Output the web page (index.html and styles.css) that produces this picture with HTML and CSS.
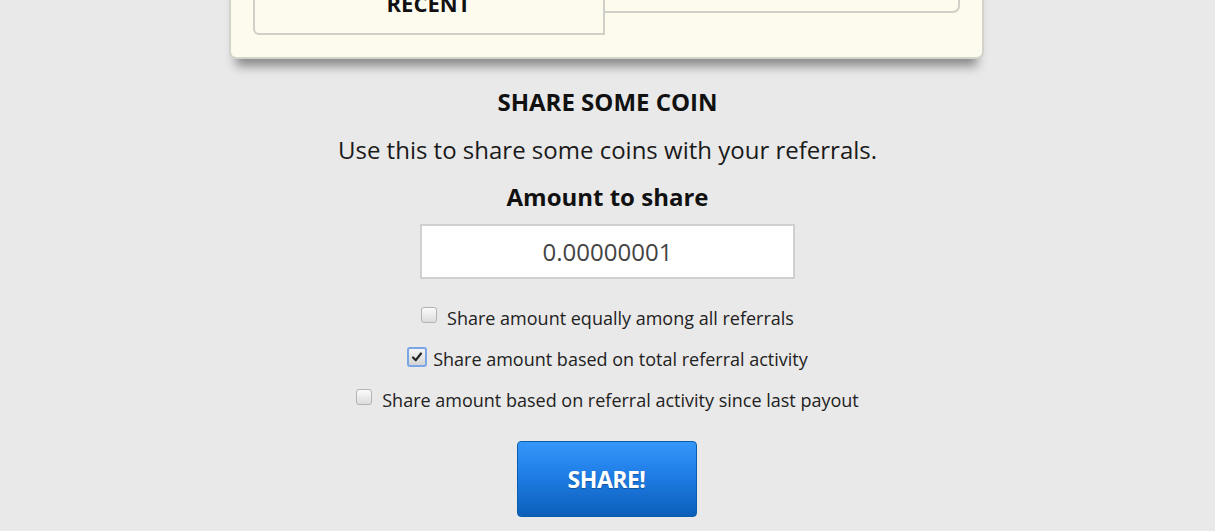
FILE: index.html
```html
<!DOCTYPE html>
<html>
<head>
<meta charset="utf-8">
<link rel="stylesheet" href="styles.css">
</head>
<body>
<div class="page">
  <div class="card">
    <div class="tabs">
      <div class="tab tab-active"><span class="tab-label">RECENT</span></div>
      <div class="tab-rest"></div>
    </div>
  </div>

  <section class="share">
    <h2 class="share-title">SHARE SOME COIN</h2>
    <p class="share-desc">Use this to share some coins with your referrals.</p>
    <h3 class="share-label">Amount to share</h3>
    <div class="amount">0.00000001</div>
    <div class="options">
      <div class="option"><span class="box"></span><span class="opt-text">Share amount equally among all referrals</span></div>
      <div class="option"><span class="box box-checked"><svg viewBox="0 0 12 12" width="12" height="12"><path d="M2 6.5 L4.8 9.2 L10 2.5" fill="none" stroke="#222" stroke-width="2.2" stroke-linecap="round" stroke-linejoin="round"/></svg></span><span class="opt-text">Share amount based on total referral activity</span></div>
      <div class="option"><span class="box"></span><span class="opt-text">Share amount based on referral activity since last payout</span></div>
    </div>
    <button class="share-btn">SHARE!</button>
  </section>
</div>
</body>
</html>
```

FILE: styles.css
```css
html, body {
  margin: 0;
  padding: 0;
  background: #e9e9e9;
  font-family: "Open Sans", "DejaVu Sans", sans-serif;
  color: #111;
  overflow: hidden;
}

.page {
  display: flex;
  flex-direction: column;
  align-items: center;
}

.card {
  box-sizing: border-box;
  width: 755px;
  margin-top: -38px;
  margin-right: 3px;
  background: #fdfbed;
  border: 2px solid #d3d2cb;
  border-top: none;
  border-radius: 0 0 7px 7px;
  padding: 0 22px 22px 22px;
  box-shadow: 0 14px 10px -7px rgba(0, 0, 0, 0.42);
}

.tabs {
  display: flex;
  align-items: flex-start;
}

.tab-active {
  box-sizing: border-box;
  width: 352px;
  height: 73px;
  border: 2px solid #d0cfc8;
  border-top: none;
  border-radius: 0 0 0 6px;
  display: flex;
  justify-content: center;
}

.tab-label {
  font-weight: 700;
  font-size: 22px;
  line-height: 24px;
  margin-top: 29px;
  color: #111;
}

.tab-rest {
  flex: 1;
  height: 49px;
  border-bottom: 2px solid #d0cfc8;
  border-right: 2px solid #d0cfc8;
  border-radius: 0 0 7px 0;
}

.share {
  display: flex;
  flex-direction: column;
  align-items: center;
  margin-top: 28px;
}

.share-title {
  margin: 0;
  font-size: 24px;
  font-weight: 700;
  line-height: 30px;
}

.share-desc {
  margin: 16px 0 0 0;
  font-size: 24px;
  line-height: 34px;
  color: #1a1a1a;
}

.share-label {
  margin: 15px 0 0 0;
  font-size: 24px;
  font-weight: 700;
  line-height: 30px;
}

.amount {
  box-sizing: border-box;
  margin-top: 12px;
  width: 375px;
  height: 55px;
  background: #fff;
  border: 2px solid #d0d0d0;
  display: flex;
  align-items: center;
  justify-content: center;
  font-size: 24px;
  color: #444;
}

.options {
  margin-top: 27px;
  display: flex;
  flex-direction: column;
  align-items: center;
  gap: 17px;
}

.option {
  display: flex;
  align-items: center;
  height: 24px;
  font-size: 18px;
  color: #222;
}

.box {
  box-sizing: border-box;
  width: 16px;
  height: 16px;
  border: 1px solid #b3b3b3;
  border-radius: 3px;
  background: linear-gradient(#fbfbfb, #dcdcdc);
  margin-right: 10px;
  margin-top: -6px;
  display: flex;
  align-items: center;
  justify-content: center;
}

.box-checked {
  width: 20px;
  height: 20px;
  border: 2px solid #7ba6e6;
  border-radius: 3px;
  background: linear-gradient(#f4f4f4, #d4d4d4);
  margin-right: 6px;
  margin-top: -4px;
}

.share-btn {
  box-sizing: border-box;
  margin-top: 29px;
  margin-right: 2px;
  width: 180px;
  height: 76px;
  border: 1px solid #0a5cad;
  border-radius: 4px;
  background: linear-gradient(#3597fa 0%, #1f7de6 45%, #0c5fb8 100%);
  color: #fff;
  font-family: "Open Sans", "DejaVu Sans", sans-serif;
  font-weight: 700;
  font-size: 23px;
  letter-spacing: -0.5px;
  text-shadow: 0 1px 1px rgba(0, 0, 0, 0.3);
  cursor: pointer;
}
```
